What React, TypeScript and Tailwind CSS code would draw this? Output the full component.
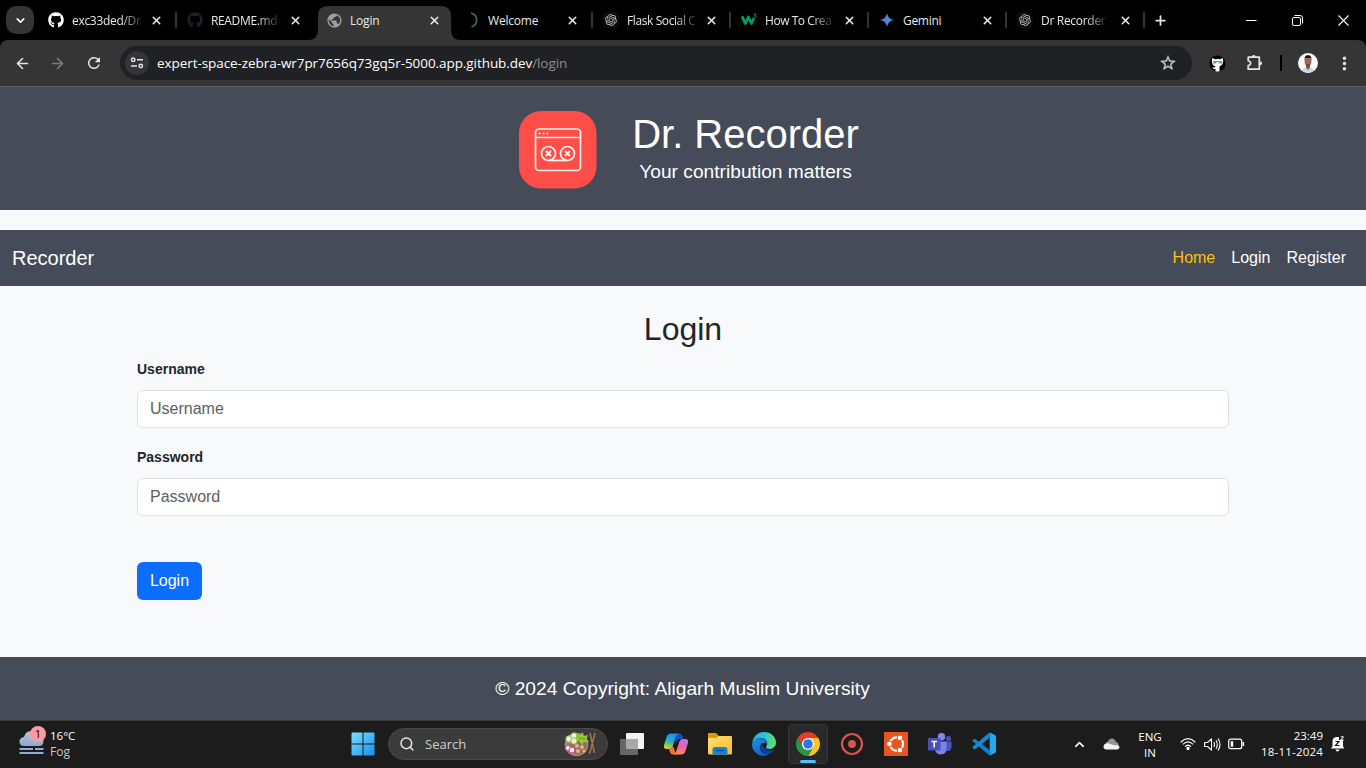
import React from "react";
import { FaGithub } from "react-icons/fa";
import { MdPublic, MdStarOutline, MdRefresh, MdMoreVert } from "react-icons/md";
import { RiOpenaiFill } from "react-icons/ri";
import { ArrowLeft, ArrowRight, ChevronDown, ChevronUp, Plus, Search, X } from "lucide-react";

const ui = "font-['Open_Sans','Noto_Sans',sans-serif]";

function OpenAi() {
  return (
    <div className="flex size-4 items-center justify-center rounded-[4px] bg-[#0c0c0c]">
      <RiOpenaiFill size={14} color="#c4c4c4" />
    </div>
  );
}

function W3() {
  return (
    <svg width="16" height="16" viewBox="0 0 16 16" fill="none">
      <path d="M1 4.2 4.3 11.5 7.4 5 10.5 11.5 13 6" stroke="#059862" strokeWidth="2.8" strokeLinejoin="round" />
      <path d="M12.6 2h2.6l-1.3 1.5c2 .2 1.5 2.5-1.4 1.6" stroke="#059862" strokeWidth="1" />
    </svg>
  );
}

function GeminiStar() {
  return (
    <svg width="16" height="16" viewBox="0 0 16 16">
      <defs>
        <linearGradient id="gem" x1="0" y1="0" x2="1" y2="0.2">
          <stop offset="0.1" stopColor="#9168c0" />
          <stop offset="0.5" stopColor="#5684d1" />
          <stop offset="1" stopColor="#1ba1e3" />
        </linearGradient>
      </defs>
      <path d="M8 1C8.9 5.300 10.700 7.100 15 8 10.700 8.900 8.900 10.700 8 15 7.100 10.700 5.300 8.900 1 8 5.300 7.100 7.100 5.300 8 1Z" fill="url(#gem)" />
    </svg>
  );
}

function Spinner() {
  return (
    <svg width="16" height="16" viewBox="0 0 16 16" fill="none">
      <path d="M7 1.200A7 7 0 0 1 7.500 14.800" stroke="#3f5e66" strokeWidth="1.800" />
    </svg>
  );
}

type TabInfo = { title: string; icon: React.ReactNode; active?: boolean; sep?: boolean; fade?: boolean; wide?: boolean; space: string };

const tabs: TabInfo[] = [
  { title: "exc33ded/Dr", icon: <FaGithub size={16} color="#fff" />, sep: true, fade: true, wide: true, space: "tracking-[-0.3px]" },
  { title: "README.md", icon: <FaGithub size={16} color="#1d2125" />, fade: true, wide: true, space: "tracking-[-0.35px]" },
  { title: "Login", icon: <MdPublic size={17} color="#9aa0a6" />, active: true, space: "tracking-[-0.2px]" },
  { title: "Welcome", icon: <Spinner />, sep: true, wide: true, space: "tracking-[-0.2px]" },
  { title: "Flask Social C", icon: <OpenAi />, sep: true, fade: true, space: "tracking-[-0.4px]" },
  { title: "How To Crea", icon: <W3 />, sep: true, fade: true, space: "tracking-[-0.45px]" },
  { title: "Gemini", icon: <GeminiStar />, sep: true, space: "tracking-[-0.3px]" },
  { title: "Dr Recorder", icon: <OpenAi />, sep: true, fade: true, space: "tracking-[-0.3px]" },
];

function Tab({ t }: { t: TabInfo }) {
  return (
    <div className={`relative h-10 shrink-0 ${t.wide ? "w-[139px]" : "w-[138px]"}`}>
      {t.active && (
        <svg className="absolute top-[6px] left-[-8px]" width="153" height="34" viewBox="0 0 153 34">
          <path d="M0 34Q10 34 10 24V10Q10 0 20 0H133Q143 0 143 10V24Q143 34 153 34Z" fill="#353535" />
        </svg>
      )}
      <div className="relative flex h-full items-center pl-[10px]">
        <div className="flex w-6 shrink-0">{t.icon}</div>
        <div className="w-[70px] shrink-0 pt-px">
          <span
            className={`block w-fit text-xs leading-4 font-medium whitespace-nowrap text-[#e8e8e8] ${t.space} ${
              t.fade ? "[mask-image:linear-gradient(to_right,#000_70%,rgba(0,0,0,0.2)_100%)]" : ""
            }`}
          >
            {t.title}
          </span>
        </div>
        <X className="ml-[8px] shrink-0" size={13} strokeWidth={2.8} color="#ececec" />
        <div className="grow" />
        {t.sep && <div className="h-4 w-[2px] bg-[#333]" />}
      </div>
    </div>
  );
}

function TabStrip() {
  return (
    <div className="flex h-10 items-center bg-black pl-[6px]">
      <div className="mr-1 flex size-7 items-center justify-center rounded-[10px] bg-[#353535]">
        <ChevronDown size={13} strokeWidth={3} color="#fff" />
      </div>
      {tabs.map((t) => (
        <Tab key={t.title} t={t} />
      ))}
      <Plus className="ml-[8px]" size={15} strokeWidth={2.8} color="#e3e3e3" />
      <div className="grow" />
      <div className="flex items-center gap-[35px] pr-[17px]">
        <svg width="11" height="11" viewBox="0 0 11 11"><path d="M0 5.500H10.500" stroke="#fff" /></svg>
        <svg width="11" height="11" viewBox="0 0 11 11" fill="none" stroke="#fff">
          <rect x="0.500" y="2.500" width="8" height="8" rx="1.500" />
          <path d="M2.500 0.500H8a2.500 2.500 0 0 1 2.500 2.500V8.500" />
        </svg>
        <svg width="11" height="11" viewBox="0 0 11 11"><path d="M0.500 0.500 10.500 10.500M10.500 0.500 0.500 10.500" stroke="#fff" strokeWidth="1.100" /></svg>
      </div>
    </div>
  );
}

function Toolbar() {
  return (
    <div className="bg-black">
      <div className="flex h-[46px] items-center rounded-t-[8px] bg-[#353535] pl-[14px]">
        <ArrowLeft size={17} strokeWidth={2.300} color="#e3e3e3" />
        <ArrowRight className="ml-[18px]" size={17} strokeWidth={2.300} color="#7c7c7c" />
        <MdRefresh className="ml-[19px]" size={18} color="#e3e3e3" />
        <div className="ml-[17px] flex h-[34px] w-[1072px] items-center rounded-full bg-[#202124] pl-[5px]">
          <div className="flex size-6 items-center justify-center rounded-full bg-[#353535]">
            <svg width="14" height="14" viewBox="0 0 14 14" fill="none" stroke="#e3e3e3" strokeWidth="1.500">
              <circle cx="3.200" cy="3.700" r="1.700" />
              <path d="M7 3.700H13M1 10H7" />
              <circle cx="10.800" cy="10" r="1.700" />
            </svg>
          </div>
          <div className="mt-px ml-[8px] grow text-[13.500px] font-medium tracking-[-0.07px] whitespace-nowrap text-white">
            expert-space-zebra-wr7pr7656q73gq5r-5000.app.github.dev
            <span className="font-normal text-[#8d8e90]">/login</span>
          </div>
          <MdStarOutline className="mr-[15px]" size={18} color="#c7c7c7" stroke="#c7c7c7" strokeWidth={0.5} />
        </div>
        <svg className="ml-[17px]" width="17" height="17" viewBox="0 0 17 17">
          <circle cx="8.500" cy="8.500" r="8" fill="#000" />
          <path d="M3.300 3 6 4.200Q8.500 3.600 11 4.200L13.700 3Q14.700 6 13.800 8.200 12.800 11 10.500 11.500V16.200Q8.500 16.700 6.500 16.200V14Q4 14.300 3 12.200 4.500 12.800 6.300 12.200V11.400Q3.700 10.500 3.200 8.200 2.500 6 3.300 3Z" fill="#fff" />
          <path d="M4 6H7.500V8.500H4ZM9.500 6H13V8.500H9.500Z" fill="#5fb37f" />
          <path d="M4 6.500H13" stroke="#5fb37f" />
        </svg>
        <svg className="ml-[20px]" width="18" height="18" viewBox="0 0 18 18">
          <path d="M2.200 3.200H13.300V15.200H2.200V11.600Q4.600 11 4.600 9.200 4.600 7.400 2.200 6.800Z" fill="none" stroke="#e3e3e3" strokeWidth="1.700" strokeLinejoin="round" />
          <path d="M5.700 3Q5.700.9 7.700.9 9.700.9 9.700 3ZM13.500 7.200Q16.200 7.200 16.200 9.200 16.200 11.200 13.500 11.200Z" fill="#e3e3e3" />
        </svg>
        <div className="ml-[16px] h-4 w-[2px] bg-black" />
        <svg className="ml-[16px]" width="20" height="20" viewBox="0 0 20 20">
          <defs><clipPath id="av"><circle cx="10" cy="10" r="10" /></clipPath></defs>
          <g clipPath="url(#av)">
            <rect width="20" height="20" fill="#fafafa" />
            <path d="M2 20Q3 14.500 10 14.500 17 14.500 18 20Z" fill="#c9dbe0" />
            <path d="M8 12H12V15L10 17 8 15Z" fill="#8f5f49" />
            <ellipse cx="10" cy="8.500" rx="3.400" ry="5" fill="#9a6a52" />
            <path d="M6.500 8Q5.800 2 10 2 14.200 2 13.500 8L13 5H7Z" fill="#211916" />
            <path d="M8 11.500Q10 10.800 12 11.500 12 13.500 10 13.500 8 13.500 8 11.500Z" fill="#5a3d30" />
          </g>
        </svg>
        <MdMoreVert className="ml-[16px]" size={21} color="#e3e3e3" />
      </div>
      <div className="h-px bg-[#5c5c5c]" />
    </div>
  );
}

function Logo() {
  return (
    <svg width="78" height="78" viewBox="0 0 78 78" fill="none">
      <rect width="77.500" height="77.500" rx="22" fill="#ff4d47" />
      <g stroke="#fff3ef" strokeWidth="1.700">
        <rect x="16.500" y="18" width="45" height="41.500" rx="3.500" />
        <path d="M16.500 26.500H61.500" />
        <circle cx="29.500" cy="42.500" r="7" />
        <circle cx="48.500" cy="42.500" r="7" />
        <path d="M29.500 49.500H48.500" />
        <path d="M27 40 32 45M32 40 27 45M46 40 51 45M51 40 46 45" strokeWidth="2" />
      </g>
      <g fill="#fff3ef">
        <circle cx="20.700" cy="22.500" r="1.100" />
        <circle cx="24.500" cy="22.500" r="1.100" />
        <circle cx="28.300" cy="22.500" r="1.100" />
      </g>
    </svg>
  );
}

function Field({ label }: { label: string }) {
  return (
    <div>
      <label className="block h-[31px] text-sm leading-[21px] font-bold">{label}</label>
      <input
        placeholder={label}
        className="block h-[38px] w-full rounded-md border border-[#dee2e6] bg-white px-3 text-base leading-6 placeholder:text-[#5c6066]"
      />
    </div>
  );
}

function Page() {
  return (
    <div className="flex h-[633px] flex-col bg-[#f8f9fb] font-['Liberation_Sans',Arial,sans-serif] text-[#212529]">
      <header className="flex h-[123px] shrink-0 bg-[#454b59] pt-[24px] pl-[519px] text-white">
        <Logo />
        <div className="-mt-px ml-[34px] flex w-[229px] flex-col items-center">
          <h1 className="text-[40px] leading-[48px] whitespace-nowrap">Dr. Recorder</h1>
          <p className="text-[19.200px] leading-[27px] whitespace-nowrap">Your contribution matters</p>
        </div>
      </header>
      <nav className="mt-5 flex h-14 shrink-0 items-center justify-between bg-[#454b59] pr-[20px] pl-3 text-white">
        <span className="text-xl">Recorder</span>
        <div className="flex gap-4 text-base">
          <span className="text-[#ffc107]">Home</span>
          <span>Login</span>
          <span>Register</span>
        </div>
      </nav>
      <main className="flex grow flex-col px-[137px] pt-[24px]">
        <h2 className="h-[49px] text-center text-[32px] leading-[38px]">Login</h2>
        <div className="flex flex-col gap-[19px]">
          <Field label="Username" />
          <Field label="Password" />
        </div>
        <button className="mt-[46px] h-[38px] w-[65px] rounded-md bg-[#0d6efd] text-base text-white">Login</button>
      </main>
      <footer className="flex h-[63px] shrink-0 items-center justify-center bg-[#454b59] pt-px pr-px text-[19.200px] text-white">
        © 2024 Copyright: Aligarh Muslim University
      </footer>
    </div>
  );
}

function WindowsLogo() {
  return (
    <svg width="24" height="24" viewBox="0 0 24 24">
      <defs>
        <linearGradient id="win" x1="0" y1="0" x2="1" y2="1">
          <stop stopColor="#7be0ff" /><stop offset="1" stopColor="#1490ee" />
        </linearGradient>
      </defs>
      <path d="M0.500 1.500Q.5.5 1.500.5H11.500V11.500H.5ZM12.500.5H22.500Q23.500.5 23.500 1.500V11.500H12.500ZM.5 12.500H11.500V23.500H1.500Q.5 23.500.5 22.500ZM12.500 12.500H23.500V22.500Q23.500 23.500 22.500 23.500H12.500Z" fill="url(#win)" />
    </svg>
  );
}

function Bowl() {
  return (
    <svg width="34" height="26" viewBox="0 0 34 26">
      <circle cx="12.500" cy="13.500" r="11.800" fill="#9c8a78" />
      <circle cx="14" cy="15" r="8.500" fill="#a0694e" />
      <g fill="#d9b49c"><circle cx="13" cy="15" r="2" /><circle cx="18" cy="16" r="2" /><circle cx="14" cy="20" r="2" /><circle cx="20" cy="20" r="1.600" /></g>
      <g fill="#e8f3d0" stroke="#8fba5c" strokeWidth="1"><circle cx="5" cy="8" r="3.200" /><circle cx="10" cy="5" r="3.200" /><circle cx="10" cy="10" r="3.200" /></g>
      <path d="M12 3 16 4 19 1 19.500 5 24 4 22.500 8 25 11 20 11 18 14 15 10 12 8Z" fill="#91cb31" />
      <path d="M15 7 21 8" stroke="#5d9922" />
      <g fill="#fbe1ea" stroke="#dc3d79" strokeWidth="1"><circle cx="4" cy="17" r="2.700" /><circle cx="8" cy="19" r="3" /></g>
      <path d="M26 2 30.500 22M31 2 25.500 23" stroke="#a97443" strokeWidth="1.500" />
    </svg>
  );
}

function TaskView() {
  return (
    <svg width="24" height="24" viewBox="0 0 24 24">
      <rect x="6" y="1" width="18" height="16" rx="1" fill="#f2f2f2" />
      <rect x="0" y="7" width="18" height="16" rx="1" fill="#666" />
      <path d="M6 7H18V17H6Z" fill="#a9a9a9" />
    </svg>
  );
}

function Copilot() {
  return (
    <svg width="26" height="24" viewBox="0 0 26 24">
      <defs>
        <linearGradient id="cp1" x1="0.500" y1="0" x2="0.200" y2="1"><stop stopColor="#1f8df0" /><stop offset="0.500" stopColor="#20b5c0" /><stop offset="0.800" stopColor="#a5c93d" /><stop offset="1" stopColor="#f3c523" /></linearGradient>
        <linearGradient id="cp2" x1="0.700" y1="0" x2="0.300" y2="1"><stop stopColor="#a77cf5" /><stop offset="0.450" stopColor="#ee62a6" /><stop offset="1" stopColor="#ff8b45" /></linearGradient>
      </defs>
      <path d="M13 1.500H17Q18.500 1.500 19.200 4L20 7H15.500L12 11Z" fill="#1b4fc4" />
      <path d="M8 1.500H15.500Q13.500 2 12.500 5.500L10 13.500Q9 17 6 17H3.500Q0 17 1.200 12.500L3.500 5Q4.500 1.500 8 1.500Z" fill="url(#cp1)" />
      <path d="M6 17Q8.500 17 9.500 14L11 16.500 13 22.500H9.500Q7.500 22.500 7 20Z" fill="#f17335" />
      <path d="M18 22.500H10.500Q12.500 22 13.500 18.500L16 10.500Q17 7 20 7H22.500Q26 7 24.800 11.500L22.500 19Q21.500 22.500 18 22.500Z" fill="url(#cp2)" />
    </svg>
  );
}

function Explorer() {
  return (
    <svg width="24" height="24" viewBox="0 0 24 24">
      <defs><linearGradient id="fold" x1="0" y1="0" x2="1" y2="1"><stop stopColor="#ffe079" /><stop offset="1" stopColor="#fbbd25" /></linearGradient></defs>
      <path d="M0 2Q0 1 1 1H8L11 4H22V8H0Z" fill="#dc9a05" />
      <path d="M0 6H8L11 4H23Q24 4 24 5V21Q24 22.500 22.500 22.500H1.500Q0 22.500 0 21Z" fill="url(#fold)" />
      <path d="M4.500 22.500V18Q4.500 15 7 15H17Q19.500 15 19.500 18V22.500Z" fill="#1681d5" />
      <path d="M8 18.500H16" stroke="#0b57a0" strokeWidth="1.500" />
    </svg>
  );
}

function Edge() {
  return (
    <svg width="24" height="24" viewBox="0 0 24 24">
      <defs>
        <linearGradient id="ed1" x1="0" y1="0.300" x2="1" y2="0.400"><stop stopColor="#28aee8" /><stop offset="0.500" stopColor="#2bc4d9" /><stop offset="1" stopColor="#68df5d" /></linearGradient>
        <linearGradient id="ed2" x1="0" y1="0" x2="0.600" y2="1"><stop stopColor="#1a94df" /><stop offset="1" stopColor="#1462bd" /></linearGradient>
      </defs>
      <path d="M0.200 11C1 4.500 6 0 12 0 19 0 24 5 24 10.500 24 14.500 21 17 17.500 17 14 17 13.500 15.500 14.500 14 17 9.500 12.500 5.500 7.500 6 3.500 6.500 1 9 .2 11Z" fill="url(#ed1)" />
      <path d="M0.100 12.500C.3 8.500 3.500 6 8 6.300 12 6.500 15 9 14.800 12 13 9.500 8 11 8 15.500 8 20.500 13 22.500 16.500 22 14.500 24 11 24.300 8 23.300 3 21.500-.2 17 .1 12.500Z" fill="url(#ed2)" />
      <path d="M10 11.500C7 14 7.500 20 12 21.800 16 23.500 21.500 20.500 22.500 17.500 19.500 19.500 11 18.500 10 11.500Z" fill="#103f91" />
    </svg>
  );
}

function Chrome() {
  return (
    <svg width="24" height="24" viewBox="0 0 24 24">
      <path d="M1.610 6A12 12 0 0 1 22.390 6H12L6.800 15Z" fill="#e33b2e" />
      <path d="M22.390 6A12 12 0 0 1 12 24L17.200 15 12 6Z" fill="#fcc31e" />
      <path d="M12 24A12 12 0 0 1 1.610 6L6.800 15 H17.200Z" fill="#269746" />
      <circle cx="12" cy="12" r="6.100" fill="#fff" />
      <circle cx="12" cy="12" r="4.800" fill="#2f76e8" />
    </svg>
  );
}

function RecordApp() {
  return (
    <svg width="24" height="24" viewBox="0 0 24 24">
      <circle cx="12" cy="12" r="10" fill="none" stroke="#dc544b" strokeWidth="2.200" />
      <circle cx="12" cy="12" r="3.900" fill="#dc544b" />
    </svg>
  );
}

function Ubuntu() {
  return (
    <svg width="24" height="24" viewBox="0 0 24 24">
      <rect width="24" height="24" fill="#e95420" />
      <circle cx="12.500" cy="12" r="6.600" fill="none" stroke="#fff" strokeWidth="2.200" />
      <g fill="#fff" stroke="#e95420" strokeWidth="1">
        <circle cx="5.400" cy="12" r="2.800" /><circle cx="16" cy="5.900" r="2.800" /><circle cx="16" cy="18.100" r="2.800" />
      </g>
    </svg>
  );
}

function Teams() {
  return (
    <svg width="24" height="24" viewBox="0 0 24 24">
      <circle cx="20.500" cy="6.500" r="2.600" fill="#4950b5" />
      <circle cx="13.500" cy="4.700" r="3.700" fill="#7f88ed" />
      <path d="M16 9.500H23.500V15Q23.500 19 19.500 19H16Z" fill="#4c55ba" />
      <path d="M7 9.500H18.500V16Q18.500 22.500 13 22.500 8 22.500 7 17.500Z" fill="#7b83eb" />
      <rect x="0" y="6" width="12.500" height="12.500" rx="1" fill="#4950b8" />
      <path d="M3.500 9.500H9M6.250 9.500V15.500" stroke="#fff" strokeWidth="1.500" />
    </svg>
  );
}

function VsCode() {
  return (
    <svg width="24" height="24" viewBox="0 0 24 24">
      <path d="M.7 8.200 2 7Q2.600 6.600 3.200 7L17.500 18V23.500L.7 9.300Q.2 8.700.7 8.200Z" fill="#1681c9" />
      <path d="M.7 15.800 2 17Q2.600 17.400 3.200 17L17.500 6V.5L.7 14.700Q.2 15.300.7 15.800Z" fill="#168bd2" />
      <path d="M17 .3 23 3Q24 3.500 24 4.500V19.500Q24 20.500 23 21L17 23.800Q17.700 23.500 17.700 22.500V1.500Q17.700.6 17 .3Z" fill="#25a7f0" />
    </svg>
  );
}

function Weather() {
  return (
    <div className="relative h-[30px] w-[28px]">
      <svg className="-mt-[2px]" width="28" height="30" viewBox="0 0 28 30">
        <defs><linearGradient id="cl" x1="0" y1="0" x2="0" y2="1"><stop stopColor="#bcc6d5" /><stop offset="1" stopColor="#8da8cf" /></linearGradient></defs>
        <path d="M6 19Q1.500 19 1.500 14.500 1.500 10.500 6 10 7.500 4 13 4 18 4 19.500 9 25.500 9 25.500 14 25.500 19 21 19Z" fill="url(#cl)" />
        <path d="M1.500 22H15M17 22H25.500M1.500 26H25.500" stroke="#91acd2" strokeWidth="2" />
      </svg>
      <div className="absolute -top-[3px] left-[12px] flex size-4 items-center justify-center rounded-full bg-[#ff99a4] text-[11px] text-black">1</div>
    </div>
  );
}

function Tray() {
  return (
    <div className="flex h-full items-center">
      <ChevronUp size={15} strokeWidth={2.4} color="#fff" />
      <svg className="ml-[16px]" width="17" height="12" viewBox="0 0 17 12">
        <path d="M3 7Q2 4 5 3.500 6 .5 9 .5 12 .5 13 4Q16 4.500 15.500 8Z" fill="#949494" />
        <path d="M3.500 11.500Q.5 11.500.5 8.500.5 6 3 5.500 5 4.500 8 6.300L11.500 7.200Q16.500 6 16.500 9.500 16 11.500 14 11.500Z" fill="#f2f2f2" />
      </svg>
      <div className="ml-[18px] w-6 pt-px text-center text-[11.500px] leading-4 text-white">
        <div className="flex justify-center">ENG</div>
        <div>IN</div>
      </div>
      <svg className="ml-[18px]" width="16" height="14" viewBox="0 0 16 14" fill="none" stroke="#fff" strokeWidth="1.200">
        <path d="M.7 5.200Q8-1.800 15.300 5.200M2.900 7.400Q8 2.500 13.100 7.400M5 9.600Q8 6.900 11 9.600" />
        <circle cx="8" cy="11.500" r="1.100" fill="#fff" />
      </svg>
      <svg className="ml-[8px]" width="17" height="15" viewBox="0 0 17 15" fill="none" stroke="#fff" strokeWidth="1.100">
        <path d="M.6 5.500H3.500L7.500 1.800V13.200L3.500 9.500H.6Z" strokeLinejoin="round" />
        <path d="M9.800 5Q11.200 7.500 9.800 10M12 3.200Q14.500 7.500 12 11.800M14 1.500Q18 7.500 14 13.500" />
      </svg>
      <svg className="ml-[7px]" width="17" height="12" viewBox="0 0 17 12" fill="none" stroke="#fff" strokeWidth="1.200">
        <rect x=".7" y="1.200" width="13" height="9.500" rx="2" />
        <path d="M15.300 4V8" strokeWidth="1.700" />
        <rect x="2.700" y="3.200" width="2.500" height="5.500" fill="#fff" stroke="none" />
      </svg>
      <div className="ml-[11px] w-[67px] text-right text-[11.500px] leading-4 text-white">
        <div>23:49</div>
        <div className="tracking-[0.2px] whitespace-nowrap">18-11-2024</div>
      </div>
      <svg className="ml-[7px]" width="16" height="16" viewBox="0 0 16 16">
        <path d="M1 12.500 2.500 10V5.500Q2.500 1 7 1H9V4H13V10L14 12.500ZM5.500 13.500H9.500Q9 15.500 7.500 15.500 6 15.500 5.500 13.500Z" fill="#fff" />
        <path d="M5.500 5.500H9L5.500 9.500H9.500" stroke="#1c1c1c" fill="none" strokeWidth="1.200" />
        <path d="M10.800.8H13.500L10.800 4H13.800" stroke="#fff" fill="none" />
      </svg>
    </div>
  );
}

function Taskbar() {
  return (
    <div className={`flex h-12 items-center border-t border-[#3a3a3a] bg-[#1c1c1c] pr-[20px] pb-px pl-[18px] ${ui}`}>
      <Weather />
      <div className="ml-[4px] w-[60px] text-[11.500px] leading-4 text-white">
        <div>16°C</div>
        <div className="text-xs leading-4 text-[#c9c9c9]">Fog</div>
      </div>
      <div className="ml-[241px] flex items-center">
        <WindowsLogo />
        <div className="ml-[13px] flex h-8 w-[220px] items-center rounded-full border border-[#4a4a4a] bg-[#3b3b3b] pr-[9px] pl-[10px]">
          <Search size={16} strokeWidth={2.200} color="#e6e6e6" />
          <span className="ml-[10px] grow pt-px text-[13px] text-[#cfcfcf]">Search</span>
          <Bowl />
        </div>
        <div className="ml-[12px] flex items-center">
          <TaskView />
          <div className="ml-[19px]"><Copilot /></div>
          <div className="ml-[19px]"><Explorer /></div>
          <div className="ml-[20px]"><Edge /></div>
          <div className="relative ml-[12px] flex size-10 items-center justify-center rounded-[4px] border border-[#363636] bg-[#292929]">
            <Chrome />
            <div className="absolute bottom-0 h-[3px] w-4 rounded-full bg-[#4cc2ff]" />
          </div>
          <div className="ml-[12px]"><RecordApp /></div>
          <div className="ml-[20px]"><Ubuntu /></div>
          <div className="ml-[20px]"><Teams /></div>
          <div className="ml-[20px]"><VsCode /></div>
        </div>
      </div>
      <div className="grow" />
      <Tray />
    </div>
  );
}

export default function App() {
  return (
    <div className="h-[768px] w-[1366px] overflow-hidden">
      <div className={ui}>
        <TabStrip />
        <Toolbar />
      </div>
      <Page />
      <Taskbar />
    </div>
  );
}
